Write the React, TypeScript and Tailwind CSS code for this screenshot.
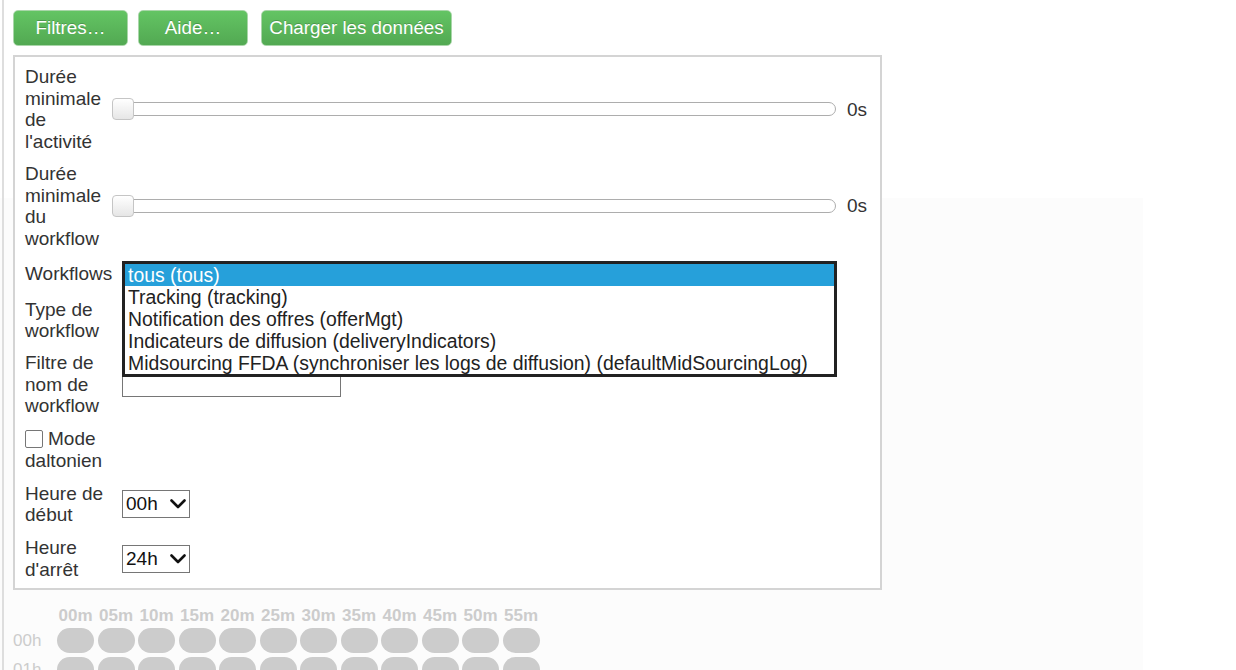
import React from 'react';

const MINUTES = ['00m', '05m', '10m', '15m', '20m', '25m', '30m', '35m', '40m', '45m', '50m', '55m'];
const HOURS = Array.from({ length: 24 }, (_, i) => `${String(i).padStart(2, '0')}h`);

const WORKFLOWS = [
  'tous (tous)',
  'Tracking (tracking)',
  'Notification des offres (offerMgt)',
  'Indicateurs de diffusion (deliveryIndicators)',
  'Midsourcing FFDA (synchroniser les logs de diffusion) (defaultMidSourcingLog)',
];

const Chevron = () => (
  <svg width="16" height="10" viewBox="0 0 16 10" className="pointer-events-none absolute right-[4px] top-1/2 -translate-y-1/2">
    <path d="M1.5 1.5 L8 8 L14.5 1.5" fill="none" stroke="#111" strokeWidth="2.6" strokeLinecap="round" strokeLinejoin="round" />
  </svg>
);

const Slider = () => (
  <div className="flex items-center">
    <div className="relative h-[14px] w-[714px] rounded-full border-[1.5px] border-[#adadad] bg-white">
      <span className="absolute -left-[11px] top-1/2 h-[22px] w-[22px] -translate-y-1/2 rounded-[4px] border border-[#c5c5c5] bg-gradient-to-b from-white to-[#e6e6e6]" />
    </div>
    <span className="ml-[11px]">0s</span>
  </div>
);

const HourSelect = ({ value }: { value: string }) => (
  <div className="relative h-[28px] w-[68px]">
    <select
      defaultValue={value}
      className="h-full w-full appearance-none border-[1.5px] border-[#767676] bg-white pl-[3px] text-[#111] outline-none"
    >
      <option value={value}>{value}</option>
    </select>
    <Chevron />
  </div>
);

const GreenButton = ({ label, width }: { label: string; width: string }) => (
  <button
    className={`${width} h-[36px] rounded-[5px] border border-[#a9d6a9] bg-gradient-to-b from-[#63c463] to-[#52a952] text-[18.8px] text-white [text-shadow:0_-1px_0_rgba(0,0,0,0.2)]`}
  >
    {label}
  </button>
);

export default function App() {
  return (
    <div className="relative h-screen overflow-hidden bg-white font-['Liberation_Sans',Arial,sans-serif] text-[19px] leading-[21.7px] text-[#333]">
      {/* faint chart background behind the filter panel */}
      <div className="absolute bottom-0 left-0 top-[198px] w-[1143px] bg-[#fcfcfc]" />

      <div className="relative ml-[2px] h-full border-l-2 border-[#dedede] pl-[9px] pt-[10px]">
        <div className="flex gap-[10px]">
          <GreenButton label="Filtres…" width="w-[115px]" />
          <GreenButton label="Aide…" width="w-[110px]" />
          <div className="ml-[3px]">
            <GreenButton label="Charger les données" width="w-[191px]" />
          </div>
        </div>

        <div className="mt-[9px] w-[869px] border-2 border-[#d4d4d4] bg-white pb-[8px] pl-[10px] pr-[10px] pt-[9px]">
          <div className="grid grid-cols-[87px_1fr] items-center gap-x-[10px] gap-y-[10px]">
            <div>Durée minimale de l'activité</div>
            <Slider />

            <div>Durée minimale du workflow</div>
            <Slider />

            <div>Workflows</div>
            <div className="relative">
              <div className="h-[29px] w-[715px]" />
              <ul className="absolute left-0 top-[1px] z-10 w-[715px] border-[3px] border-[#222] bg-white text-[19.4px] leading-[22.3px] text-[#222]">
                {WORKFLOWS.map((w, i) => (
                  <li
                    key={w}
                    className={`h-[22px] whitespace-nowrap pl-[3px] ${i === 0 ? 'bg-[#26a0da] text-white' : ''}`}
                  >
                    {w}
                  </li>
                ))}
              </ul>
            </div>

            <div>Type de workflow</div>
            <div className="h-[28px] w-[200px] border-[1.5px] border-[#767676] bg-white" />

            <div>Filtre de nom de workflow</div>
            <input type="text" className="h-[24px] w-[219px] border-[1.5px] border-[#767676] bg-white outline-none" />

            <div className="col-span-2 mt-[1px]">
              <label className="flex w-[87px] flex-wrap items-center">
                <span className="mr-[5px] inline-block h-[18px] w-[18px] rounded-[2px] border-[1.5px] border-[#767676] bg-white" />
                <span>Mode</span>
                <span>daltonien</span>
              </label>
            </div>

            <div className="mt-[1px]">Heure de début</div>
            <div className="mt-[1px]">
              <HourSelect value="00h" />
            </div>

            <div className="mt-[1px]">Heure d'arrêt</div>
            <div className="mt-[1px]">
              <HourSelect value="24h" />
            </div>
          </div>
        </div>

        <div className="mt-[16px] text-[17px] leading-[20px] text-[#cccccc]">
          <div className="flex">
            <div className="w-[44px]" />
            <div className="flex gap-[3.5px] font-bold">
              {MINUTES.map(m => (
                <div key={m} className="w-[37px] text-center">{m}</div>
              ))}
            </div>
          </div>
          <div className="mt-[2px] flex flex-col gap-[4px]">
            {HOURS.map(h => (
              <div key={h} className="flex items-center">
                <div className="w-[44px]">{h}</div>
                <div className="flex gap-[3.5px]">
                  {MINUTES.map(m => (
                    <div key={m} className="h-[25px] w-[37px] rounded-full bg-[#cccccc]" />
                  ))}
                </div>
              </div>
            ))}
          </div>
        </div>
      </div>
    </div>
  );
}
